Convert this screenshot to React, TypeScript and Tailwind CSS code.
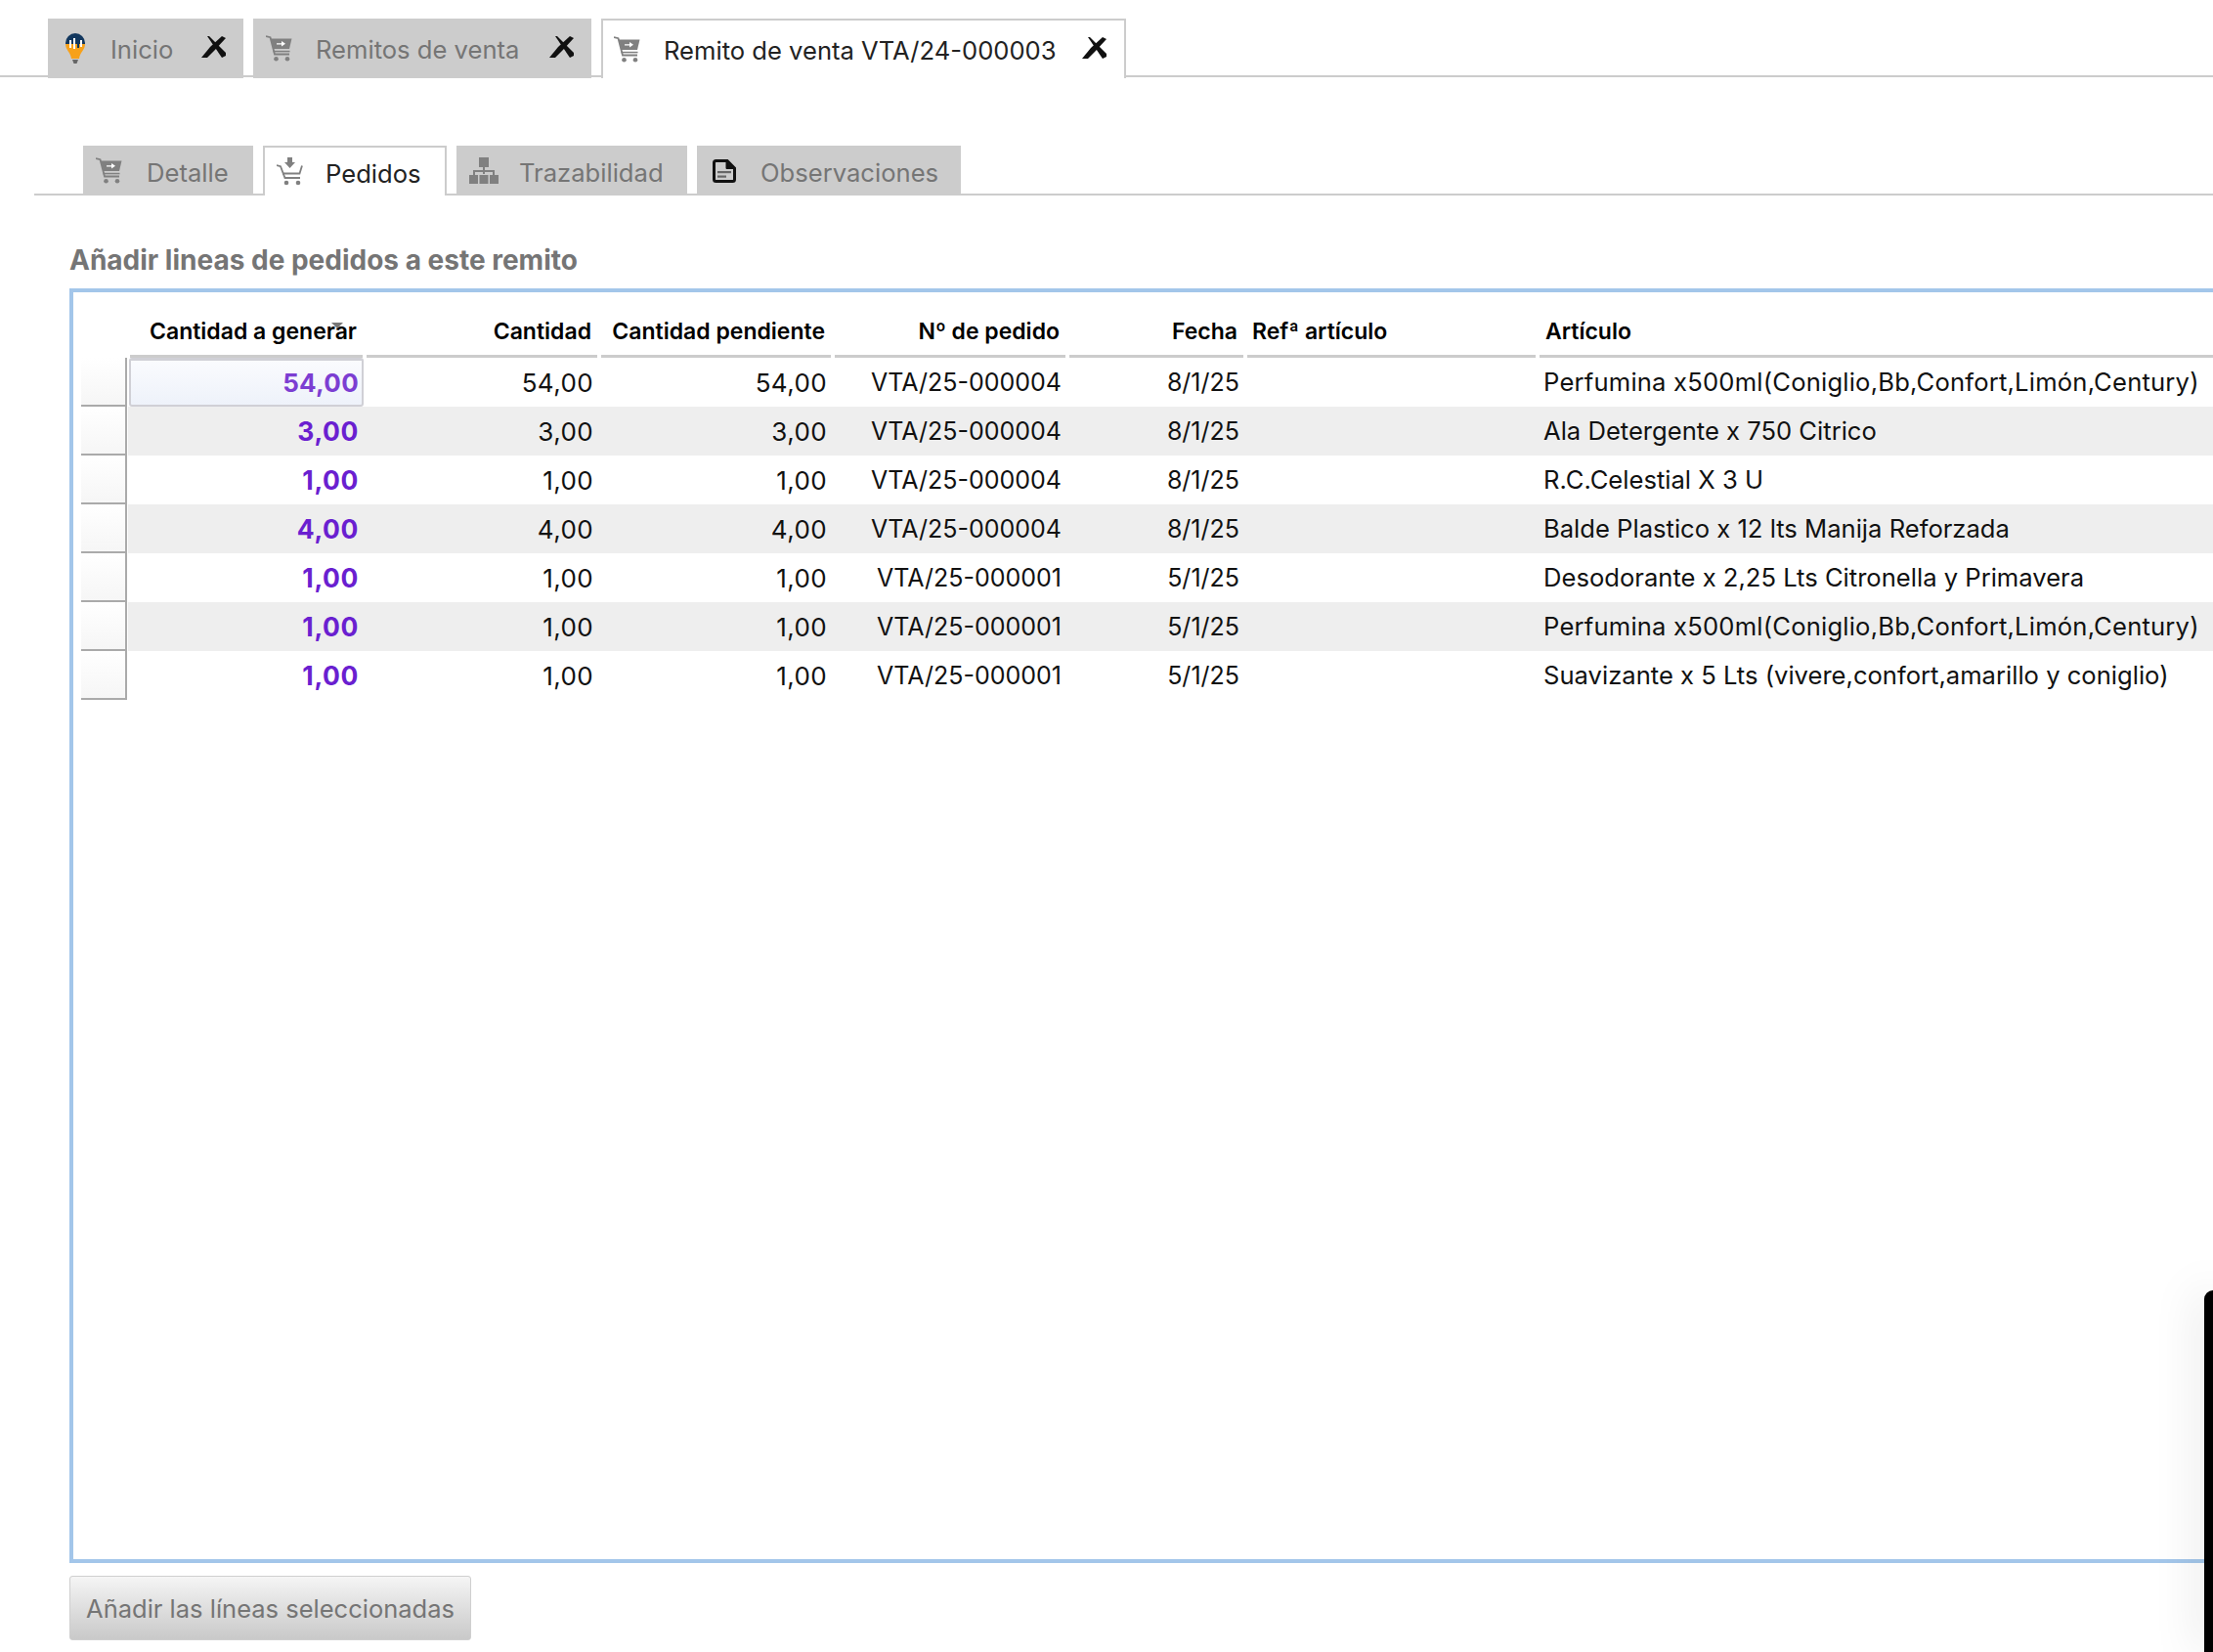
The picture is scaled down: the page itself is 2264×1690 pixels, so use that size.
import React from 'react';

const COLS = 'grid grid-cols-[48px_242px_240px_239px_240px_182px_299px_1fr]';

const rows = [
  { gen: '54,00', pedido: 'VTA/25-000004', fecha: '8/1/25', articulo: 'Perfumina x500ml(Coniglio,Bb,Confort,Limón,Century)' },
  { gen: '3,00', pedido: 'VTA/25-000004', fecha: '8/1/25', articulo: 'Ala Detergente x 750 Citrico' },
  { gen: '1,00', pedido: 'VTA/25-000004', fecha: '8/1/25', articulo: 'R.C.Celestial X 3 U' },
  { gen: '4,00', pedido: 'VTA/25-000004', fecha: '8/1/25', articulo: 'Balde Plastico x 12 lts Manija Reforzada' },
  { gen: '1,00', pedido: 'VTA/25-000001', fecha: '5/1/25', articulo: 'Desodorante x 2,25 Lts Citronella y Primavera' },
  { gen: '1,00', pedido: 'VTA/25-000001', fecha: '5/1/25', articulo: 'Perfumina x500ml(Coniglio,Bb,Confort,Limón,Century)' },
  { gen: '1,00', pedido: 'VTA/25-000001', fecha: '5/1/25', articulo: 'Suavizante x 5 Lts (vivere,confort,amarillo y coniglio)' },
];

const CartIcon = ({ className }: { className: string }) => (
  <svg viewBox="0 0 27 27" className={className}>
    <path d="M0 1 L4.5 2.2 L9 19.5 L24 19.5" fill="none" stroke="#808080" strokeWidth="1.800" />
    <path d="M5 3.500 H26.500 L24 14 H8 Z" fill="#808080" />
    <path d="M11 8.300 H16 V6 L20 8.800 L16 11.400 V9.500 H11 Z" fill="#fff" />
    <rect x="7.500" y="15.800" width="17" height="1.500" fill="#808080" />
    <circle cx="10.500" cy="24.300" r="2.300" fill="#808080" />
    <circle cx="22" cy="24.300" r="2.300" fill="#808080" />
  </svg>
);

const CartDownIcon = () => (
  <svg viewBox="0 0 27 29" className="w-[27px] h-[29px] shrink-0">
    <path d="M0 8 L4 9.2 L8.5 21 L24 21" fill="none" stroke="#808080" strokeWidth="1.800" />
    <path d="M6 16.500 H23.500 L26 8.500" fill="none" stroke="#808080" strokeWidth="1.800" />
    <path d="M11 0 H16 V5 H19 L13.500 11 L8 5 H11 Z" fill="#808080" />
    <circle cx="10" cy="26" r="2.300" fill="#808080" />
    <circle cx="22" cy="26" r="2.300" fill="#808080" />
  </svg>
);

const TreeIcon = () => (
  <svg viewBox="0 0 30 27" className="w-[30px] h-[27px] shrink-0" fill="#808080">
    <rect x="10" y="0" width="10" height="10" />
    <rect x="14" y="10" width="2" height="7" />
    <rect x="4" y="13" width="22" height="2" />
    <rect x="4" y="13" width="2" height="5" />
    <rect x="24" y="13" width="2" height="5" />
    <rect x="0" y="18" width="9" height="9" />
    <rect x="10.500" y="18" width="9" height="9" />
    <rect x="21" y="18" width="9" height="9" />
  </svg>
);

const DocIcon = () => (
  <svg viewBox="0 0 24 24" className="w-[24px] h-[24px] shrink-0">
    <path d="M1.500 3.500 Q1.500 1.500 3.500 1.500 H15 L22.500 9 V20.500 Q22.500 22.500 20.500 22.500 H3.500 Q1.500 22.500 1.500 20.500 Z" fill="#cccccc" stroke="#111" strokeWidth="3" />
    <path d="M14 2 V9.500 H22" fill="#111" stroke="#111" strokeWidth="1" />
    <rect x="5" y="12" width="14" height="2.200" fill="#666" />
    <rect x="5" y="16.500" width="9" height="2.200" fill="#666" />
  </svg>
);

const BulbIcon = () => (
  <svg viewBox="0 0 20 31" className="w-[20px] h-[31px] shrink-0">
    <path d="M0 10 A10 10 0 0 1 20 10 L20 11 H0 Z" fill="#12375e" />
    <path d="M0 11 H20 C20 17 15 19 14 26 H6 C5 19 0 17 0 11 Z" fill="#f7a11a" />
    <rect x="4" y="7" width="2" height="8" fill="#fff" />
    <rect x="8" y="5" width="2" height="11" fill="#fff" />
    <rect x="12" y="3" width="2" height="12" fill="#12375e" />
    <rect x="15" y="7" width="2" height="7" fill="#fff" />
    <path d="M7 27 H13 L11.500 31 H8.500 Z" fill="#666" />
  </svg>
);

const CloseIcon = () => (
  <svg viewBox="0 0 26 23" className="w-[26px] h-[23px] shrink-0" fill="#111">
    <path d="M6 0 H8 L25 17 V20 L21 22 Z" />
    <path d="M25 2 L21 0 L9 11 L0 22 L6 22 L13 15 Z" />
  </svg>
);

const TopTab = ({ icon, label, active, width, gap, pl }: { icon: React.ReactNode; label: string; active?: boolean; width: string; gap: string; pl: string }) => (
  <div className={`${width} ${pl} h-[61px] -mb-[2px] flex items-center shrink-0 text-[25.6px] ${active ? 'bg-white border-2 border-b-0 border-[#cccccc] text-[#222222]' : 'bg-[#cccccc] text-[#757575]'}`}>
    <span className="-mt-[1px]">{icon}</span>
    <span className={`${gap} mt-[4px] whitespace-nowrap`}>{label}</span>
    <span className="ml-auto mr-[17px] -mt-[3px]"><CloseIcon /></span>
  </div>
);

const SubTab = ({ icon, label, active, width, gap, pl }: { icon: React.ReactNode; label: string; active?: boolean; width: string; gap: string; pl: string }) => (
  <div className={`${width} ${pl} h-[51px] -mb-[2px] flex items-center shrink-0 text-[25.6px] ${active ? 'bg-white border-2 border-b-0 border-[#cccccc] text-[#222222]' : 'bg-[#cccccc] text-[#757575]'}`}>
    <span>{icon}</span>
    <span className={`${gap} mt-[5px] whitespace-nowrap`}>{label}</span>
  </div>
);

const Head = ({ children, left, pl }: { children?: React.ReactNode; left?: boolean; pl?: string }) => (
  <div className={`mx-[2px] h-[67px] pb-[7px] flex items-end border-b-[3px] border-[#cccccc] text-[23px] font-semibold text-black whitespace-nowrap ${left ? `justify-start ${pl}` : 'justify-end pr-[6px]'}`}>
    {children}
  </div>
);

const Num = ({ children }: { children: React.ReactNode }) => (
  <div className="h-[50px] flex items-center justify-end pr-[6px] pt-[1px] text-[26px] tracking-[0.4px] text-[#111111]">{children}</div>
);

const Ref = ({ children }: { children: React.ReactNode }) => (
  <div className="h-[50px] flex items-center justify-end pr-[6px] pt-[1px] text-[25px] text-[#111111]">{children}</div>
);

export default function App() {
  return (
    <div className="relative w-[2264px] h-[1690px] overflow-hidden bg-white font-['Inter',sans-serif]">
      {/* Document tabs */}
      <div className="h-[79px] pt-[19px] pl-[49px] flex gap-[10px] border-b-2 border-[#cccccc]">
        <TopTab icon={<BulbIcon />} label="Inicio" width="w-[200px]" pl="pl-[18px]" gap="ml-[26px]" />
        <TopTab icon={<CartIcon className="w-[27px] h-[27px] shrink-0" />} label="Remitos de venta" width="w-[346px]" pl="pl-[13px]" gap="ml-[24px]" />
        <TopTab active icon={<CartIcon className="w-[27px] h-[27px] shrink-0" />} label="Remito de venta VTA/24-000003" width="w-[537px]" pl="pl-[11px]" gap="ml-[24px]" />
      </div>

      {/* Section tabs */}
      <div className="mt-[70px] ml-[35px] h-[51px] pl-[50px] flex gap-[10px] border-b-2 border-[#cccccc]">
        <SubTab icon={<CartIcon className="w-[27px] h-[27px] shrink-0" />} label="Detalle" width="w-[174px]" pl="pl-[13px]" gap="ml-[25px]" />
        <SubTab active icon={<CartDownIcon />} label="Pedidos" width="w-[188px]" pl="pl-[12px]" gap="ml-[23px]" />
        <SubTab icon={<TreeIcon />} label="Trazabilidad" width="w-[236px]" pl="pl-[13px]" gap="ml-[21px]" />
        <SubTab icon={<DocIcon />} label="Observaciones" width="w-[270px]" pl="pl-[16px]" gap="ml-[25px]" />
      </div>

      <div className="ml-[71px] mt-[50px] h-[32px] flex items-center text-[28px] font-bold text-[#757575]">
        Añadir lineas de pedidos a este remito
      </div>

      {/* Lines table */}
      <div className="ml-[71px] mt-[13px] w-[2300px] h-[1304px] border-4 border-[#a3c6ea]">
        <div className={`${COLS} pl-[8px]`}>
          <div />
          <div className="relative">
            <Head>Cantidad a generar</Head>
            <div className="absolute left-[208px] top-[31px] w-0 h-0 border-x-[6px] border-x-transparent border-t-[6px] border-t-[#777777]" />
          </div>
          <Head>Cantidad</Head>
          <Head>Cantidad pendiente</Head>
          <Head>Nº de pedido</Head>
          <Head>Fecha</Head>
          <Head left pl="pl-[5px]">Refª artículo</Head>
          <Head left pl="pl-[6px]">Artículo</Head>
        </div>
        {rows.map((row, i) => (
          <div key={i} className="flex pl-[8px] h-[50px]">
            <div className="w-[47px] h-[50px] mr-[1px] shrink-0 bg-gradient-to-b from-white to-[#f6f6f6] border-r-2 border-b-2 border-[#aaaaaa]" />
            <div className={`flex-1 grid grid-cols-[242px_240px_239px_240px_182px_299px_1fr] ${i % 2 === 1 ? 'bg-[#eeeeee]' : ''}`}>
              <div className={i === 0 ? 'bg-gradient-to-b from-[#fafbfe] to-[#eef2fa] border-2 border-t-[3px] border-[#d0d0d6] rounded-[3px] mx-[1px]' : ''}>
                <div className={`h-full flex items-center justify-end font-bold ${i === 0 ? 'pr-[3px] text-[26px] tracking-[0.3px] text-[#7c3ed2]' : 'pr-[6px] pt-[1px] text-[26.500px] tracking-[0.6px] text-[#6a1fd0]'}`}>{row.gen}</div>
              </div>
              <Num>{row.gen}</Num>
              <Num>{row.gen}</Num>
              <Ref>{row.pedido}</Ref>
              <Ref>{row.fecha}</Ref>
              <div />
              <div className={`h-[50px] flex items-center pl-[6px] pt-[1px] text-[25.6px] text-[#111111] whitespace-nowrap ${i === 0 || i === 5 ? 'tracking-[0.2px]' : ''}`}>{row.articulo}</div>
            </div>
          </div>
        ))}
      </div>

      <button className="ml-[71px] mt-[13px] w-[411px] h-[66px] pt-[2px] rounded-[3px] border border-[#cfcfcf] bg-gradient-to-b from-[#f5f5f5] to-[#c9c9c9] text-[25.500px] text-[#757575] text-center whitespace-nowrap">
        Añadir las líneas seleccionadas
      </button>

      {/* Edge of the overlapping window */}
      <div className="absolute right-0 top-[1320px] bottom-0 w-[9px] bg-black rounded-tl-[12px] shadow-[0_0_45px_rgba(0,0,0,0.25)]" />
    </div>
  );
}
